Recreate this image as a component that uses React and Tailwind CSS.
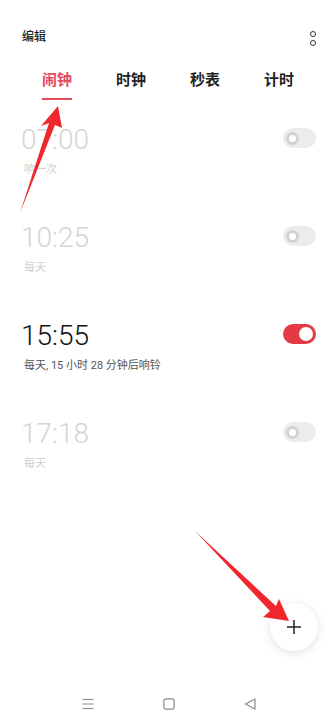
import React from "react";

const font = { fontFamily: 'Roboto, "Noto Sans CJK SC", sans-serif' };

function Toggle({ on }) {
  if (on) {
    return (
      <div className="w-[33px] h-[20px] rounded-full bg-[#e63946] flex items-center justify-end pr-[3px]">
        <div className="w-[14px] h-[14px] rounded-full bg-white" />
      </div>
    );
  }
  return (
    <div className="w-[33px] h-[20px] rounded-full bg-[#ececec] flex items-center pl-[3px]">
      <div className="w-[13px] h-[13px] rounded-full border-[3px] border-[#d2d2d2] bg-white" />
    </div>
  );
}

function Row({ time, sub, on }) {
  return (
    <div className="h-[98px] pl-[21px] pr-[20px] flex justify-between">
      <div className="pt-[6px]">
        <div className={`text-[28px] leading-[36px] font-light ${on ? "text-[#111]" : "text-[#d4d4d4]"}`}>{time}</div>
        <div className={`mt-[5px] pl-[3px] text-[11px] leading-[14px] ${on ? "text-[#555]" : "text-[#cfcfcf]"}`}>{sub}</div>
      </div>
      <div className="pt-[12px]">
        <Toggle on={on} />
      </div>
    </div>
  );
}

export default function App() {
  return (
    <div className="relative w-[336px] h-[723px] bg-white overflow-hidden" style={font}>
      <div className="h-[70px] pt-[28px] px-[22px] flex justify-between">
        <div className="text-[12px] leading-[18px] font-medium text-[#222]">编辑</div>
        <div className="flex flex-col gap-[3px] pt-[3px] mr-[-2px]">
          <div className="w-[6px] h-[6px] rounded-full border-[1.8px] border-[#333]" />
          <div className="w-[6px] h-[6px] rounded-full border-[1.8px] border-[#333]" />
        </div>
      </div>
      <div className="px-[20px] grid grid-cols-4 h-[46px]">
        {["闹钟", "时钟", "秒表", "计时"].map((t, i) => (
          <div key={t} className="flex flex-col items-center">
            <div className={`text-[15px] leading-[20px] font-bold ${i === 0 ? "text-[#e34a5e]" : "text-[#222]"}`}>{t}</div>
            <div className={`mt-[8px] w-[30px] h-[2px] ${i === 0 ? "bg-[#e34a5e]" : "bg-transparent"}`} />
          </div>
        ))}
      </div>
      <Row time="07:00" sub="响一次" on={false} />
      <Row time="10:25" sub="每天" on={false} />
      <Row time="15:55" sub="每天, 15 小时 28 分钟后响铃" on={true} />
      <Row time="17:18" sub="每天" on={false} />

      <div className="absolute left-[270px] top-[603px] w-[48px] h-[48px] rounded-full bg-white shadow-[0_2px_10px_rgba(0,0,0,0.12)] flex items-center justify-center">
        <svg width="18" height="18" viewBox="0 0 18 18">
          <path d="M9 2v14M2 9h14" stroke="#222" strokeWidth="1.5" />
        </svg>
      </div>

      <div className="absolute left-0 top-[690px] w-full h-[33px]">
        <div className="absolute left-[82px] top-[8px]">
          <svg width="12" height="12" viewBox="0 0 12 12">
            <path d="M0.5 1.5h11M0.5 6h11M0.5 10.5h11" stroke="#8a8a8a" strokeWidth="1.2" />
          </svg>
        </div>
        <div className="absolute left-[163px] top-[8px]">
          <svg width="12" height="12" viewBox="0 0 12 12">
            <rect x="0.8" y="0.8" width="10.4" height="10.4" rx="2.5" fill="none" stroke="#8a8a8a" strokeWidth="1.2" />
          </svg>
        </div>
        <div className="absolute left-[244px] top-[8px]">
          <svg width="12" height="12" viewBox="0 0 12 12">
            <path d="M11 1L1.5 6L11 11Z" fill="none" stroke="#8a8a8a" strokeWidth="1.2" strokeLinejoin="round" />
          </svg>
        </div>
      </div>

      <svg className="absolute left-0 top-0 pointer-events-none" width="336" height="723" viewBox="0 0 336 723">
        <polygon points="58,106 41,126 49,123 20,213 55,125 62,128" fill="#f0282d" />
        <polygon points="289,621 263,617 270,611 195,531 276,606 279,599" fill="#f0282d" />
      </svg>
    </div>
  );
}
